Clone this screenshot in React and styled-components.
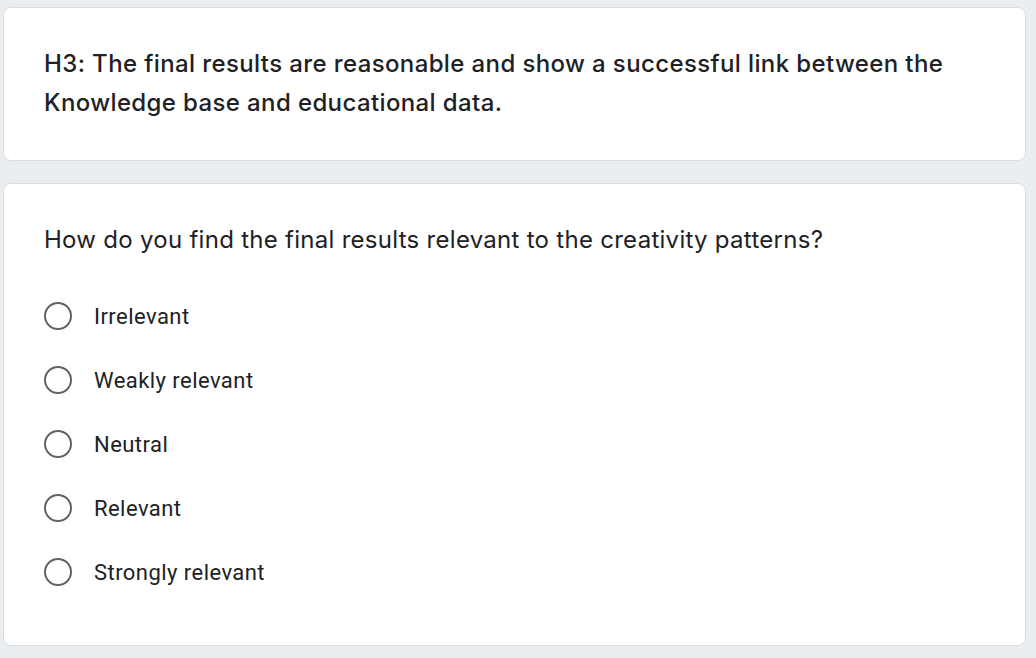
import styled, { createGlobalStyle } from 'styled-components';

const GlobalStyle = createGlobalStyle`
  html, body {
    margin: 0;
    padding: 0;
    background: #ebeef1;
  }
`;

const Page = styled.div`
  display: flex;
  flex-direction: column;
  gap: 22px;
  padding: 7px 10px 12px 3px;
  width: 1036px;
  box-sizing: border-box;
`;

const Card = styled.div`
  background: #fff;
  border: 1px solid #dadce0;
  border-radius: 8px;
  padding: ${(p) => p.$pad};
  box-sizing: border-box;
`;

const Heading = styled.h2`
  margin: 0;
  font-family: Inter, 'Open Sans', sans-serif;
  font-weight: 500;
  font-size: 24px;
  line-height: 39px;
  color: #202124;
  letter-spacing: 0.38px;
`;

const Question = styled.div`
  font-family: Inter, 'Open Sans', sans-serif;
  font-weight: 400;
  font-size: 24px;
  line-height: 32px;
  color: #202124;
  letter-spacing: 0.28px;
  margin-bottom: 46px;
`;

const Options = styled.div`
  display: flex;
  flex-direction: column;
  gap: 36px;
`;

const Option = styled.label`
  display: flex;
  align-items: center;
  gap: 22px;
  height: 28px;
  cursor: pointer;
`;

const Radio = styled.span`
  width: 28px;
  height: 28px;
  border: 2px solid #5f6368;
  border-radius: 50%;
  box-sizing: border-box;
  flex-shrink: 0;
`;

const OptionText = styled.span`
  font-family: Roboto, 'Liberation Sans', sans-serif;
  font-size: 22px;
  letter-spacing: 0.45px;
  color: #202124;
`;

const options = ['Irrelevant', 'Weakly relevant', 'Neutral', 'Relevant', 'Strongly relevant'];

export default function App() {
  return (
    <>
      <GlobalStyle />
      <Page>
        <Card $pad="36px 40px 38px">
          <Heading>
            H3: The final results are reasonable and show a successful link between the
            Knowledge base and educational data.
          </Heading>
        </Card>
        <Card $pad="40px 40px 59px">
          <Question>How do you find the final results relevant to the creativity patterns?</Question>
          <Options>
            {options.map((o) => (
              <Option key={o}>
                <Radio />
                <OptionText>{o}</OptionText>
              </Option>
            ))}
          </Options>
        </Card>
      </Page>
    </>
  );
}
